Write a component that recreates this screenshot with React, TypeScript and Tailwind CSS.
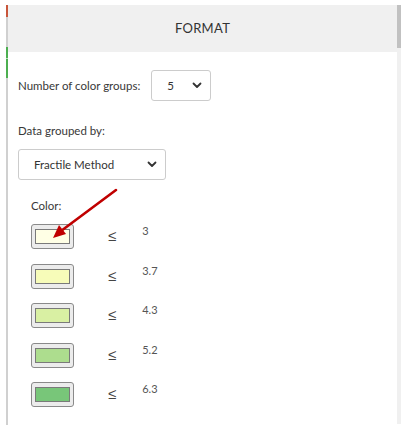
const GROUPS = [
  { color: '#ffffe5', max: '3' },
  { color: '#f7fcb9', max: '3.7' },
  { color: '#d9f0a3', max: '4.3' },
  { color: '#addd8e', max: '5.2' },
  { color: '#78c679', max: '6.3' },
]

function Chevron() {
  return (
    <svg width="10" height="7" viewBox="0 0 10 7" className="shrink-0">
      <path d="M1.5 1.5 L5 5 L8.5 1.5" fill="none" stroke="#333" strokeWidth="1.8" strokeLinecap="round" strokeLinejoin="round" />
    </svg>
  )
}

function Select({ value, width }: { value: string; width: string }) {
  return (
    <div className={`${width} h-[31px] flex items-center justify-between pl-[15px] pr-[8px] border border-[#ccc] rounded-[3px] bg-white text-[11.5px] text-[#333]`}>
      <span>{value}</span>
      <Chevron />
    </div>
  )
}

export default function App() {
  return (
    <div className="relative w-[404px] h-[430px] bg-white pt-[5px] flex font-['Lato',sans-serif] text-[#383838]">
      <div className="ml-[6px] w-[2px] h-[420px] flex flex-col bg-[#d0d0d0]">
        <div className="h-[12px] bg-[#c8553a]" />
        <div className="h-[30px]" />
        <div className="h-[11px] bg-[#4caf50]" />
        <div className="h-[1px] bg-[#b9dcb9]" />
        <div className="h-[19px] bg-[#4caf50]" />
      </div>

      <div className="w-[389px] h-[420px] flex flex-col">
        <div className="h-[47px] bg-[#f0f0f0] flex items-center justify-center text-[13px] tracking-[0.3px] text-[#333]">
          FORMAT
        </div>

        <div className="px-[10px] pt-[18px] text-[11.5px]">
          <div className="flex items-center gap-[11px]">
            <span>Number of color groups:</span>
            <Select value="5" width="w-[60px]" />
          </div>

          <div className="mt-[22px] h-[16px] leading-[16px]">Data grouped by:</div>
          <div className="mt-[10px]">
            <Select value="Fractile Method" width="w-[148px]" />
          </div>

          <div className="mt-[18px] ml-[13px] h-[16px] leading-[16px]">Color:</div>

          <div className="mt-[10px] ml-[13px] flex flex-col gap-[14.5px]">
            {GROUPS.map((g) => (
              <div key={g.max} className="flex items-start h-[25px]">
                <div className="w-[43px] h-[25px] rounded-[3px] border border-[#8a8a8a] bg-[#ececec] flex items-center justify-center">
                  <div className="w-[35px] h-[15px] border border-[#7a7a7a]" style={{ backgroundColor: g.color }} />
                </div>
                <span className="ml-[34px] mt-[2px] text-[15px] leading-[20px] text-[#444] font-['DejaVu_Sans',sans-serif] font-light">≤</span>
                <span className="ml-[26px] text-[11px] leading-[14px] text-[#555]">{g.max}</span>
              </div>
            ))}
          </div>
        </div>
      </div>

      <div className="w-[4px] h-[419px] bg-[#f0f0f0]">
        <div className="h-[43px] bg-[#c1c1c1]" />
      </div>

      <svg className="absolute left-0 top-0 pointer-events-none" width="404" height="430">
        <line x1="116" y1="190" x2="61" y2="231" stroke="#c00000" strokeWidth="2.6" strokeLinecap="round" />
        <path d="M53 238 L59 225 L66 234 Z" fill="#c00000" />
      </svg>
    </div>
  )
}
